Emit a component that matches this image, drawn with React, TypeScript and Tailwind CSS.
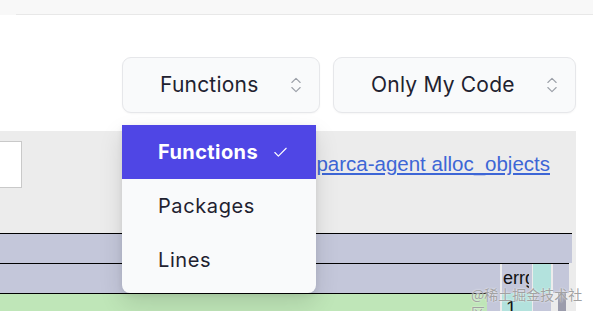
import { Check, ChevronsUpDown } from "lucide-react";

const options = ["Functions", "Packages", "Lines"];

const SelectButton = ({ label, width }: { label: string; width: string }) => {
  return (
    <button
      className={`${width} h-[56px] flex items-center justify-between pl-[37px] pr-[12px] bg-[#f9fafb] border border-[#e6e7ea] rounded-[9px] shadow-[0_1px_2px_rgba(0,0,0,0.04)] text-[21px] text-[#1f2230] tracking-[0.01em]`}
    >
      <span>{label}</span>
      <ChevronsUpDown className="w-[22px] h-[20px] text-[#9ca0a8]" strokeWidth={1.3} />
    </button>
  );
};

// flame graph cells, painted as a chart
const FlameGraph = () => {
  return (
    <svg width="576" height="78" className="block">
      <defs>
        <clipPath id="errg">
          <rect x="502" y="30" width="27" height="30" />
        </clipPath>
      </defs>
      <rect x="0" y="0" width="572" height="30" fill="#c4c7da" />
      <line x1="0" y1="0.5" x2="572" y2="0.5" stroke="#000" />

      <rect x="0" y="30" width="500" height="30" fill="#c4c7da" />
      <rect x="502" y="30" width="30" height="30" fill="#c4c7da" />
      <rect x="533" y="30" width="18" height="30" fill="#b3e2dd" />
      <rect x="553" y="30" width="16" height="30" fill="#c4c7da" />
      <line x1="0" y1="30.5" x2="569" y2="30.5" stroke="#000" />
      <text
        x="503"
        y="51"
        fontSize="18"
        fontFamily="Liberation Sans, Arial, sans-serif"
        fill="#111"
        clipPath="url(#errg)"
      >
        errg
      </text>

      <rect x="0" y="60" width="487" height="18" fill="#bfe6b8" />
      <rect x="487" y="60" width="13" height="18" fill="#c4c7da" />
      <rect x="502" y="60" width="30" height="18" fill="#b3e2dd" />
      <rect x="533" y="60" width="18" height="18" fill="#c4c7da" />
      <rect x="558" y="60" width="8" height="18" fill="#9b9cac" />
      <line x1="0" y1="60.5" x2="487" y2="60.5" stroke="#000" />
      <text x="506" y="81" fontSize="19" fontFamily="Liberation Sans, Arial, sans-serif" fill="#111">
        1
      </text>
    </svg>
  );
};

const App = () => {
  const selected = "Functions";

  return (
    <div className="relative w-[593px] h-[311px] overflow-hidden bg-white font-['Inter',sans-serif]">
      <div className="h-[15px] bg-[#f8f8f8] flex">
        <div className="ml-[16px] flex-1 border-b border-[#e8e8e8]" />
      </div>

      <div className="flex justify-end gap-[13px] pr-[17px] mt-[42px]">
        <SelectButton label="Functions" width="w-[198px]" />
        <SelectButton label="Only My Code" width="w-[243px]" />
      </div>

      <section className="mt-[18px] w-[576px] h-[180px] bg-[#ececec]">
        <div className="flex items-start pt-[10px] h-[102px]">
          <div className="w-[23px] h-[47px] -ml-[1px] bg-white border border-[#c9c9c9]" />
          <a
            href="#"
            className="ml-auto mr-[26px] mt-[11px] text-[20.5px] leading-[24px] text-[#3d66d6] underline underline-offset-2 font-['Liberation_Sans',Arial,sans-serif]"
          >
            parca-agent alloc_objects
          </a>
        </div>
        <FlameGraph />
      </section>

      <ul className="absolute left-[122px] top-[125px] w-[194px] pb-[6px] bg-[#f9fafb] rounded-b-[8px] shadow-[0_10px_25px_rgba(0,0,0,0.12),0_2px_6px_rgba(0,0,0,0.08)] overflow-hidden">
        {options.map((item) => (
          <li
            key={item}
            className={
              item === selected
                ? "h-[54px] flex items-center pl-[36px] bg-[#4f46e5] text-white font-bold text-[20px] tracking-[0.02em]"
                : "h-[54px] flex items-center pl-[36px] text-[#1f2230] text-[20px] tracking-[0.03em]"
            }
          >
            {item}
            {item === selected && <Check className="ml-[14px] w-[17px] h-[17px]" strokeWidth={1.6} />}
          </li>
        ))}
      </ul>

      <span className="absolute left-[471px] top-[285px] text-[14px] leading-[18px] text-[#a2a2a2] [text-shadow:0_0_2px_#fff] font-['Noto_Sans_CJK_SC',sans-serif]">
        @稀土掘金技术社区
      </span>
    </div>
  );
};

export default App;
